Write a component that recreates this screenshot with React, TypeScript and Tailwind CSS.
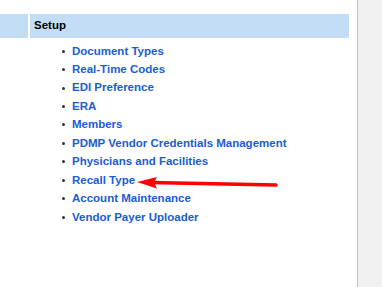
import React from "react";

const links = [
  "Document Types",
  "Real-Time Codes",
  "EDI Preference",
  "ERA",
  "Members",
  "PDMP Vendor Credentials Management",
  "Physicians and Facilities",
  "Recall Type",
  "Account Maintenance",
  "Vendor Payer Uploader",
];

export default function App() {
  return (
    <div
      className="relative flex h-[287px] w-[382px] bg-white"
      style={{ fontFamily: '"Liberation Sans", Arial, sans-serif' }}
    >
      {/* Main content */}
      <div className="w-[357px] pt-[14px]">
        <div className="flex h-[24px] gap-[2px]">
          <div className="w-[28px] bg-[#c3ddf6]" />
          <div className="flex w-[319px] items-center bg-[#c3ddf6] pl-[4px] text-[11.5px] font-bold text-black">
            Setup
          </div>
        </div>

        <ul className="mt-[4px] pl-[62px]">
          {links.map((label) => (
            <li key={label} className="flex h-[18.44px] items-center">
              <span className="mr-[7px] h-[3px] w-[3px] rounded-full bg-[#333]" />
              <a href="#" className="text-[11.5px] font-bold text-[#1a5cd6]">
                {label}
              </a>
            </li>
          ))}
        </ul>
      </div>

      {/* Right gray panel */}
      <div className="flex-1 border-l border-[#c8c8c8] bg-[#f0f0f0]" />

      {/* Red annotation arrow */}
      <svg
        className="pointer-events-none absolute left-0 top-0"
        width="382"
        height="287"
        viewBox="0 0 382 287"
      >
        <line x1="150" y1="182.6" x2="276" y2="185" stroke="#ff0000" strokeWidth="3.5" strokeLinecap="round" />
        <polygon points="137,182 157,177 154,182.6 157,188.5" fill="#ff0000" />
      </svg>
    </div>
  );
}
